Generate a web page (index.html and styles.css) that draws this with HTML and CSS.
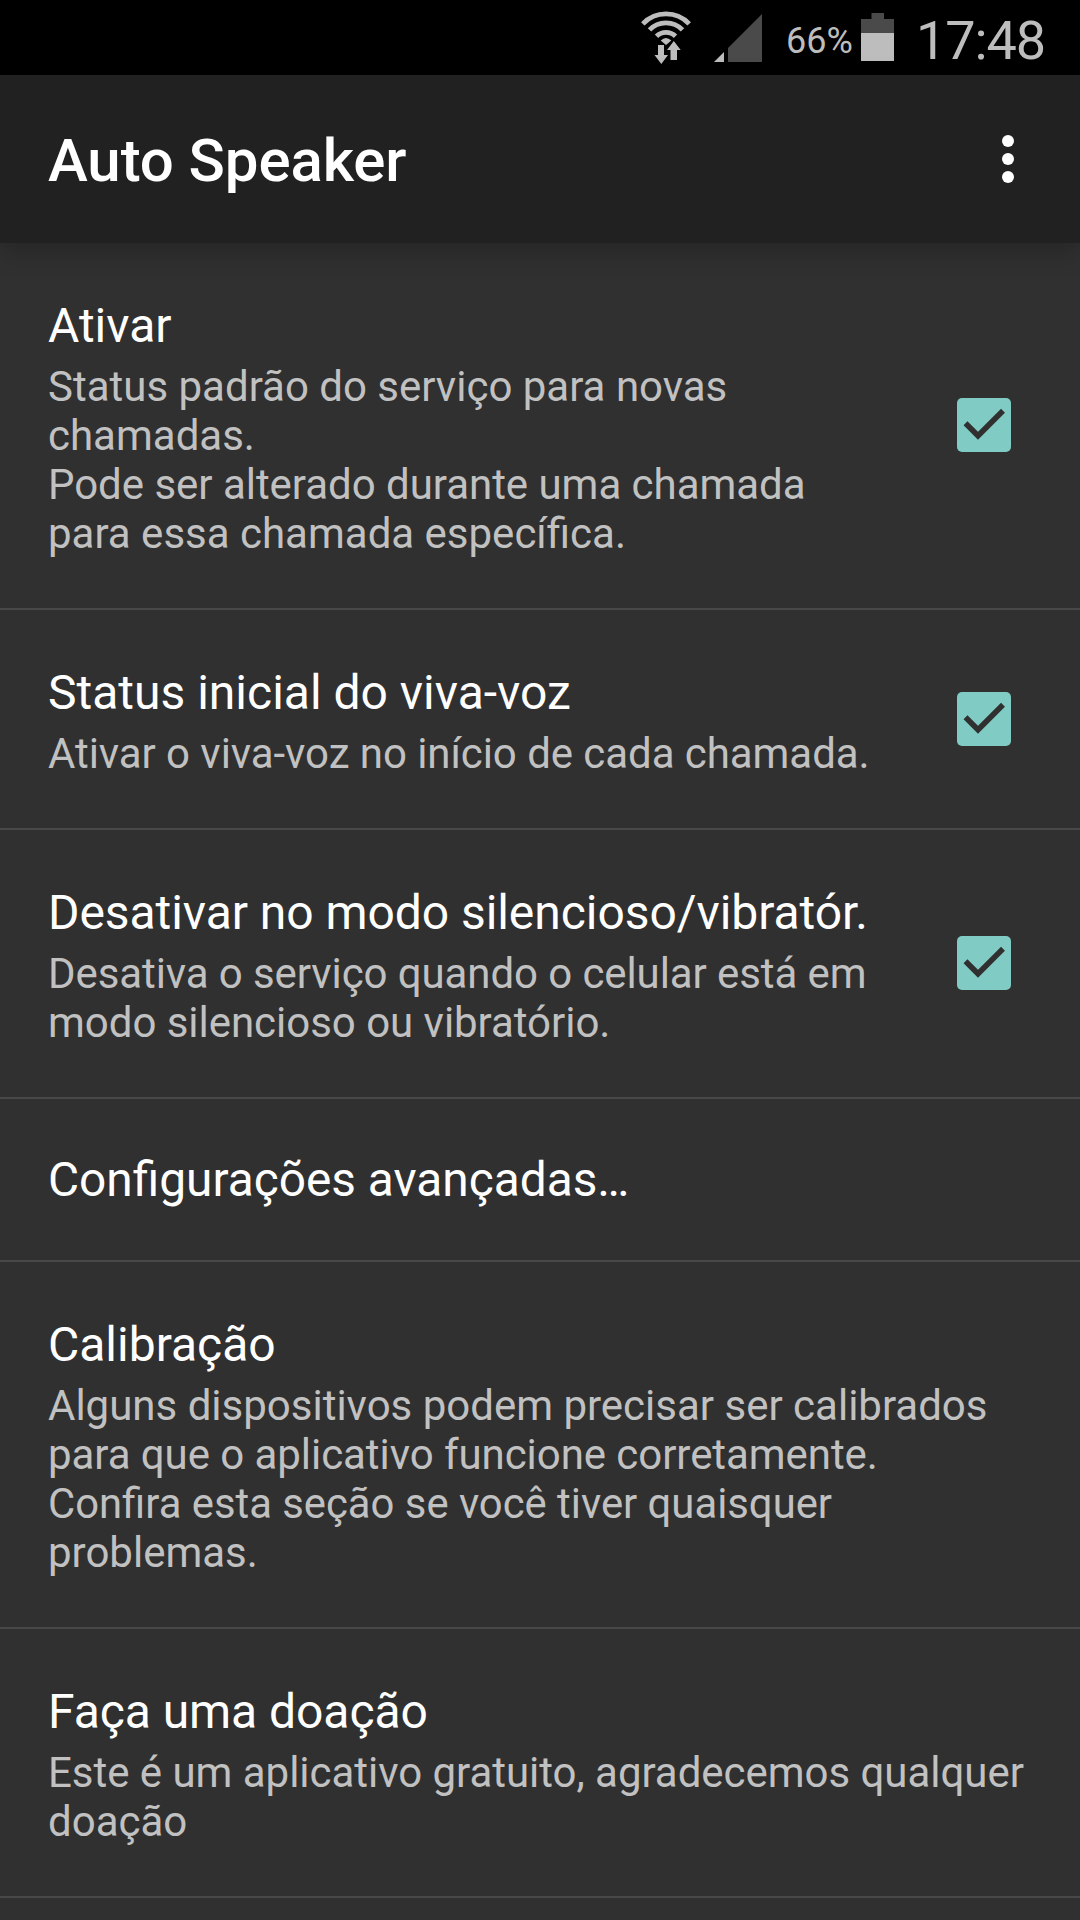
FILE: index.html
```html
<!DOCTYPE html>
<html lang="pt-BR">
<head>
<meta charset="utf-8">
<title>Auto Speaker</title>
<link rel="stylesheet" href="styles.css">
</head>
<body>
<div class="status">
  <svg class="wifi" width="50" height="54" viewBox="0 0 50 54"><g fill="none" stroke="#bdbdbd" stroke-width="4.800"><path d="M1.800 12.800A32 32 0 0 1 48.200 12.800"/><path d="M8.500 18.900A22.700 22.700 0 0 1 41.500 18.900"/><path d="M15.500 25.200A13.500 13.500 0 0 1 34.500 25.200"/></g><path fill="#bdbdbd" d="M25 34l-5.300-4.500Q25 24.500 30.300 29.500z"/><path fill="#bdbdbd" stroke="#000" stroke-width="2" paint-order="stroke" d="M17 34h6v10h4l-6.700 9l-6.800-9H17zM29.500 49h6.500V39h3.700l-6.900-9l-6.800 9h3.500z"/></svg>
  <svg class="signal" width="48" height="48" viewBox="0 0 48 48"><path fill="#4a4a4a" d="M48 0V48H14V34z"/><path fill="#bdbdbd" d="M10 38V48H0z"/></svg>
  <span class="pct">66%</span>
  <svg class="battery" width="33" height="48" viewBox="0 0 33 48"><path fill="#4a4a4a" d="M10.500 0h12.500v6h10v14H0V6h10.500z"/><path fill="#bdbdbd" d="M0 20h33v28H0z"/></svg>
  <span class="clock">17:48</span>
</div>
<header class="appbar"><h1>Auto Speaker</h1><div class="menu"><i></i><i></i><i></i></div></header>
<main class="list">
  <section class="item"><div class="text"><h2>Ativar</h2><p>Status padrão do serviço para novas<br>chamadas.<br><span class="snug">Pode ser alterado durante uma chamada</span><br>para essa chamada específica.</p></div><svg class="check" width="54" height="54" viewBox="0 0 54 54"><rect width="54" height="54" rx="5" fill="#80cbc4"/><path d="M8.500 25.300L21 37.800L46 12.800" fill="none" stroke="#303030" stroke-width="5.500"/></svg></section>
  <section class="item"><div class="text"><h2>Status inicial do viva-voz</h2><p class="tight">Ativar o viva-voz no início de cada chamada.</p></div><svg class="check" width="54" height="54" viewBox="0 0 54 54"><rect width="54" height="54" rx="5" fill="#80cbc4"/><path d="M8.500 25.300L21 37.800L46 12.800" fill="none" stroke="#303030" stroke-width="5.500"/></svg></section>
  <section class="item"><div class="text"><h2 class="tight">Desativar no modo silencioso/vibratór.</h2><p><span class="tighter">Desativa o serviço quando o celular está em</span><br><span class="snug">modo silencioso ou vibratório.</span></p></div><svg class="check" width="54" height="54" viewBox="0 0 54 54"><rect width="54" height="54" rx="5" fill="#80cbc4"/><path d="M8.500 25.300L21 37.800L46 12.800" fill="none" stroke="#303030" stroke-width="5.500"/></svg></section>
  <section class="item single"><div class="text"><h2>Configurações avançadas…</h2></div></section>
  <section class="item"><div class="text"><h2>Calibração</h2><p>Alguns dispositivos podem precisar ser calibrados<br><span class="tight">para que o aplicativo funcione corretamente.</span><br><span class="fit">Confira esta seção se você tiver quaisquer</span><br>problemas.</p></div></section>
  <section class="item"><div class="text"><h2 class="tight">Faça uma doação</h2><p><span class="snug">Este é um aplicativo gratuito, agradecemos qualquer</span><br>doação</p></div></section>
</main>
</body>
</html>
```
FILE: styles.css
```css
* { box-sizing: border-box; margin: 0; padding: 0; }
body { width: 1080px; height: 1920px; overflow: hidden; background: #303030; font-family: Roboto, sans-serif; color: #fff; }
.status { height: 75px; background: #000; display: flex; align-items: flex-start; justify-content: flex-end; padding-right: 36px; color: #bdbdbd; white-space: nowrap; }
.status > * { flex: none; }
.wifi { margin: 11px 23px 0 0; }
.signal { margin: 14px 24px 0 0; }
.pct { width: 66px; margin: 20px 9px 0 0; font-size: 36px; line-height: 43px; }
.battery { margin: 13px 22px 0 0; }
.clock { width: 128px; margin-top: 9px; font-size: 54px; line-height: 64px; letter-spacing: -1.1px; }
.appbar { position: relative; height: 168px; background: #212121; display: flex; align-items: center; justify-content: space-between; padding: 0 66px 0 48px; box-shadow: 0 8px 24px rgba(0,0,0,.23); }
h1 { font-size: 60px; font-weight: 500; padding-top: 3px; letter-spacing: -.1px; }
.menu { display: flex; flex-direction: column; gap: 6px; }
.menu i { width: 12px; height: 12px; border-radius: 50%; background: #fff; }
.item { display: flex; align-items: center; justify-content: space-between; padding: 0 69px 0 48px; border-bottom: 2px solid #484848; white-space: nowrap; }
.text { display: flex; flex-direction: column; gap: 4px; padding: 51px 0 50px; }
.single .text { padding: 49px 0 48px; }
h2 { font-size: 48px; font-weight: 400; line-height: 64px; }
.single h2 { font-size: 47.8px; }
p { font-size: 42px; line-height: 49px; color: #c1c1c1; }
.snug { letter-spacing: -.03px; }
.tight { letter-spacing: -.06px; }
.tighter { letter-spacing: -.09px; }
.fit { font-size: 41.8px; }
.check { flex: none; margin-bottom: 1px; }
```
